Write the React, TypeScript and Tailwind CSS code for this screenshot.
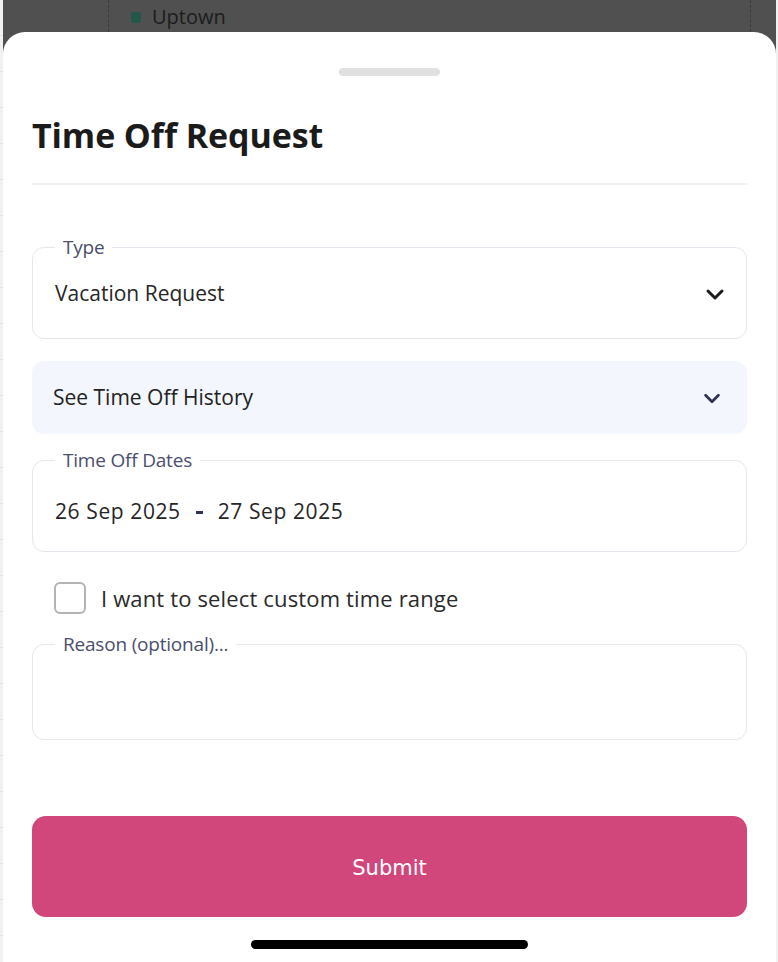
import React from 'react';

const font = { fontFamily: '"Open Sans", "Noto Sans", sans-serif' };

const Chevron = ({ className }: { className?: string }) => (
  <svg viewBox="0 0 24 24" className={className} fill="none" stroke="currentColor" strokeWidth={3} strokeLinecap="round" strokeLinejoin="round">
    <path d="M5 9l7 7 7-7" />
  </svg>
);

const Outlined = ({ label, children, h }: { label: string; children?: React.ReactNode; h: string }) => (
  <fieldset className={`border border-[#e6e6ef] rounded-[12px] px-[22px] ${h} min-w-0`}>
    <legend className="px-[8px] text-[19px] leading-[20px] text-[#4b4e6d] tracking-[-0.2px]">{label}</legend>
    {children}
  </fieldset>
);

export default function App() {
  return (
    <div className="w-[778px] h-[962px] flex bg-[#f1f1f1] overflow-hidden" style={font}>
      <div className="w-[3px] flex flex-col">
        {Array.from({ length: 26 }).map((_, i) => (
          <div key={i} className="h-[36px] border-b border-[#e2e2e2]" />
        ))}
      </div>
      <div className="flex-1 flex flex-col bg-[#505050]">
        <div className="h-[32px] flex items-center relative">
          <div className="absolute left-[105px] top-0 h-[32px] border-l border-dashed border-[#3a3a3a]" />
          <div className="absolute left-[747px] top-0 h-[32px] border-l border-dashed border-[#3a3a3a]" />
          <div className="ml-[128px] mt-[2px] flex items-center gap-[11px]">
            <div className="w-[10px] h-[11px] rounded-[2px] bg-[#24574a]" />
            <span className="text-[20px] leading-[24px] text-[#1c1c1c]">Uptown</span>
          </div>
        </div>
        <div className="flex-1 bg-white rounded-t-[22px] flex flex-col px-[29px]">
          <div className="flex justify-center pt-[36px]">
            <div className="w-[101px] h-[8px] rounded-full bg-[#e0e0e0]" />
          </div>
          <h1 className="mt-[39px] text-[34px] leading-[40px] font-bold text-[#1b1b1b] tracking-[-0.1px]">Time Off Request</h1>
          <div className="mt-[28px] h-[2px] bg-[#efeff5]" />

          <div className="mt-[52px]">
            <Outlined label="Type" h="h-[102px]">
              <div className="flex items-center justify-between h-[80px] -mt-[3px]">
                <span className="text-[21px] text-[#262626]">Vacation Request</span>
                <Chevron className="w-[24px] h-[24px] text-[#1a1a1a] -mr-[3px]" />
              </div>
            </Outlined>
          </div>

          <div className="mt-[22px] h-[73px] bg-[#f3f6fd] rounded-[12px] flex items-center justify-between pl-[21px] pr-[24px]">
            <span className="text-[21px] font-medium text-[#222]">See Time Off History</span>
            <Chevron className="w-[22px] h-[22px] text-[#2f3452]" />
          </div>

          <div className="mt-[16px]">
            <Outlined label="Time Off Dates" h="h-[102px]">
              <div className="flex items-center h-[80px] mt-[2px] text-[21px] text-[#262626] tracking-[0.6px]">
                <span>26 Sep 2025</span>
                <span className="mx-[15px] w-[7px] h-[3px] bg-[#2f3452]" />
                <span>27 Sep 2025</span>
              </div>
            </Outlined>
          </div>

          <label className="mt-[30px] ml-[22px] flex items-center gap-[15px]">
            <span className="w-[32px] h-[32px] rounded-[6px] border-2 border-[#b3b3b3]" />
            <span className="text-[22px] leading-[30px] text-[#2a2a2a] tracking-[0.15px]">I want to select custom time range</span>
          </label>

          <div className="mt-[20px]">
            <Outlined label="Reason (optional)..." h="h-[106px]" />
          </div>

          <button className="mt-[76px] h-[101px] pt-[4px] rounded-[14px] bg-[#d1467b] text-white text-[21px]" style={{ fontFamily: '"DejaVu Sans", sans-serif' }}>
            Submit
          </button>

          <div className="flex justify-center mt-[23px]">
            <div className="w-[277px] h-[9px] rounded-full bg-black" />
          </div>
        </div>
      </div>
      <div className="w-[2px] bg-[#f1f1f1]" />
    </div>
  );
}
